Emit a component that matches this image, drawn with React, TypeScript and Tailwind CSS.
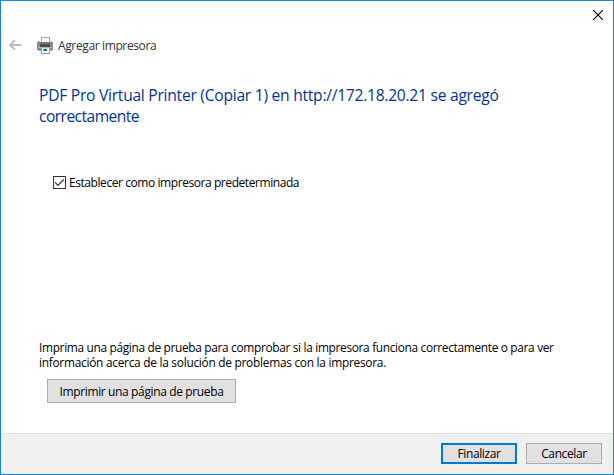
function PrinterIcon() {
  return (
    <svg width="16" height="17" viewBox="0 0 16 17" shapeRendering="crispEdges" className="block" aria-hidden="true">
      <rect x="4" y="0" width="9" height="6" fill="#a3a3a3" />
      <rect x="5" y="1" width="7" height="5" fill="#fff" />
      <rect x="1" y="4" width="2" height="1" fill="#b5b5b5" />
      <rect x="14" y="4" width="1" height="1" fill="#b5b5b5" />
      <rect x="0" y="5" width="16" height="8" fill="#8c8c8c" />
      <rect x="1" y="13" width="14" height="1" fill="#a6a6a6" />
      <rect x="3" y="5" width="10" height="1" fill="#7d7d7d" />
      <rect x="3" y="6" width="10" height="1" fill="#6c6c6c" />
      <rect x="3" y="7" width="10" height="1" fill="#5c5c5c" />
      <rect x="3" y="8" width="10" height="2" fill="#494949" />
      <rect x="1" y="10" width="14" height="1" fill="#b8b8b8" />
      <rect x="4" y="11" width="9" height="6" fill="#999" />
      <rect x="5" y="11" width="7" height="5" fill="#fff" />
      <rect x="6" y="11" width="5" height="1" fill="#b9dff3" />
      <rect x="6" y="12" width="2" height="2" fill="#2588c9" />
      <rect x="8" y="12" width="2" height="2" fill="#1b4b50" />
      <rect x="9" y="12" width="1" height="1" fill="#48a878" />
    </svg>
  );
}

export default function App() {
  return (
    <div className="flex h-[475px] w-[614px] flex-col overflow-hidden border border-[#1883d7] bg-white font-['Open_Sans','Noto_Sans',sans-serif] text-[12px] leading-[15px] tracking-[-0.37px] text-black">
      <div className="flex h-7 shrink-0 justify-end pt-[9px] pr-[10px]">
        <button aria-label="Cerrar" className="h-[10px] w-[10px]">
          <svg width="10" height="10" viewBox="0 0 10 10" className="block">
            <path d="M0 0 10 10M10 0 0 10" stroke="#000" strokeWidth="1.1" />
          </svg>
        </button>
      </div>
      <header className="flex h-8 shrink-0 items-center pl-2">
        <svg width="13" height="12" viewBox="0 0 13 12" fill="none" className="block" aria-hidden="true">
          <path d="M12.5 6H1.5M6 1.2 1.2 6 6 10.8" stroke="#bdbdbd" strokeWidth="1.9" />
        </svg>
        <span className="ml-[15px]">
          <PrinterIcon />
        </span>
        <span className="mt-px ml-[5px] tracking-[-0.37px] text-[#333]">Agregar impresora</span>
      </header>

      <main className="flex grow flex-col pl-[38px]">
        <h1 className="mt-6 text-[15.6px] leading-[21px] whitespace-nowrap text-[#003399]">
          <span className="block tracking-[-0.25px]">PDF Pro Virtual Printer (Copiar 1) en http://172.18.20.21 se agregó</span>
          <span className="block tracking-[-0.55px]">correctamente</span>
        </h1>
        <label className="mt-[48px] ml-[14px] flex items-center">
          <span className="flex h-[13px] w-[13px] items-center justify-center border border-[#333]">
            <svg width="11" height="11" viewBox="0 0 11 11" fill="none" aria-hidden="true">
              <path d="M1.2 5.5 4 8.3 9.8 2.5" stroke="#333" strokeWidth="1.2" />
            </svg>
          </span>
          <span className="ml-[3px] tracking-[-0.43px]">Establecer como impresora predeterminada</span>
        </label>
        <p className="mt-auto w-[530px] text-[11.9px] leading-[15px] tracking-[-0.33px]">
          Imprima una página de prueba para comprobar si la impresora funciona correctamente o para ver{' '}
          <span className="tracking-[-0.27px]">información acerca de la solución de problemas con la impresora.</span>
        </p>
        <button className="mt-[9px] mb-[30px] ml-2 flex h-6 w-[189px] items-center justify-center border border-[#adadad] bg-[#e1e1e1]">
          <span>Imprimir una página de prueba</span>
        </button>
      </main>

      <footer className="flex h-[41px] shrink-0 justify-end gap-[9px] border-t border-[#dfdfdf] bg-[#f0f0f0] pt-[9px] pr-[11px]">
        <button className="flex h-[21px] w-[76px] items-center justify-center border-2 border-[#0078d7] bg-[#e1e1e1]">
          <span>Finalizar</span>
        </button>
        <button className="flex h-[21px] w-[76px] items-center justify-center border border-[#adadad] bg-[#e1e1e1]">
          <span>Cancelar</span>
        </button>
      </footer>
    </div>
  );
}
